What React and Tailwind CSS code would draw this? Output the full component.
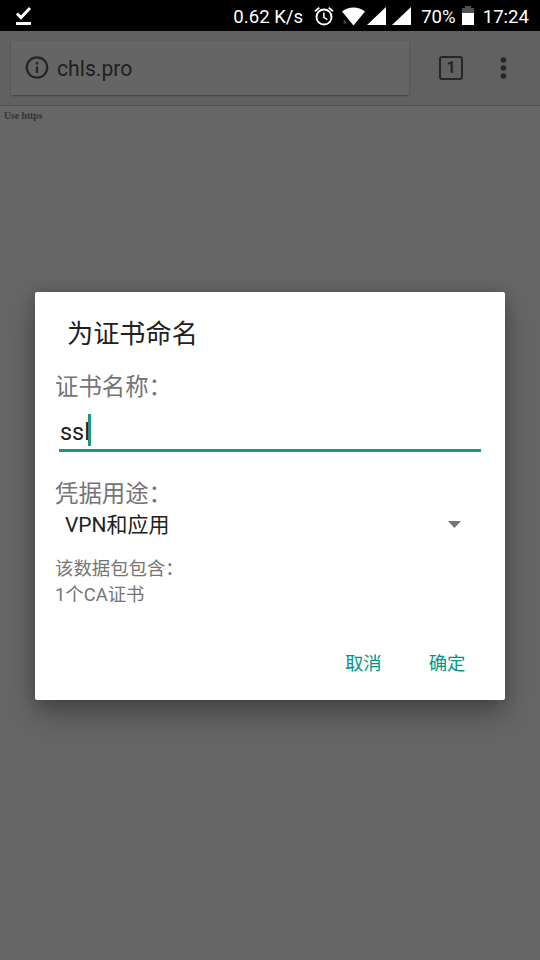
function StatusBar() {
  return (
    <div className="flex h-[31px] shrink-0 items-center bg-black text-[18.6px] leading-[31px] text-white">
      <svg className="ml-[15px] h-[20px] w-[17px]" viewBox="0 0 17 20" fill="none" stroke="#fff">
        <path d="M2 7.5 L6 11.5 L15 2" strokeWidth="3" />
        <path d="M1 17.5 H16" strokeWidth="3" />
      </svg>
      <span className="ml-auto mt-[3px] whitespace-nowrap">0.62 K/s</span>
      <svg className="ml-[11px] h-[20px] w-[20px] shrink-0" viewBox="0 0 20 20" fill="none" stroke="#fff">
        <circle cx="10" cy="11" r="7.5" strokeWidth="1.9" />
        <path d="M9.9 6.5 V11.3 L13.4 13.6" strokeWidth="1.5" />
        <path d="M1 5.3 L5.3 1.6 M19 5.3 L14.7 1.6" strokeWidth="1.9" />
      </svg>
      <svg className="ml-[8px] mt-px h-[19px] w-[23px] shrink-0" viewBox="0 0 23 19" fill="#fff">
        <path d="M0 4.5 C6.5 -1 16.5 -1 23 4.5 L11.5 18.5 Z" />
        <path d="M1.8 12.5 L4.3 15 L3 17.5 L1.5 16 Z" fill="#444" />
      </svg>
      <svg className="ml-[2px] mt-px h-[18px] w-[19px] shrink-0" viewBox="0 0 19 18" fill="#fff">
        <path d="M0 18 L19 0 V18 Z" />
      </svg>
      <svg className="ml-[6px] mt-px h-[18px] w-[19px] shrink-0" viewBox="0 0 19 18" fill="#fff">
        <path d="M0 18 L19 0 V18 Z" />
      </svg>
      <span className="ml-[10px] mt-[3px]">70%</span>
      <svg className="ml-[6px] h-[19px] w-[12px] shrink-0" viewBox="0 0 12 19">
        <path d="M0 2 H3 V0 H9 V2 H12 V7 H0 Z" fill="#505050" />
        <path d="M0 7 H12 V19 H0 Z" fill="#fff" />
      </svg>
      <span className="ml-[9px] mr-[11px] mt-[3px]">17:24</span>
    </div>
  );
}

function BrowserBar() {
  return (
    <div className="flex h-[75px] shrink-0 items-center border-b border-[#505050] bg-[#616161] text-[#1f1f1f]">
      <div className="ml-[11px] flex h-[54px] w-[398px] items-center rounded-[1px] bg-[#656565] shadow-[0_1px_2px_rgba(0,0,0,0.3)]">
        <svg className="ml-[14px] h-[24px] w-[24px]" viewBox="0 0 24 24" fill="none" stroke="#262626">
          <circle cx="12" cy="11.5" r="10.2" strokeWidth="2.3" />
          <path d="M12 10.5 V17 M12 6 V8.5" strokeWidth="2.3" />
        </svg>
        <span className="ml-[8px] mt-[2px] text-[21.2px] leading-[24px]">chls.pro</span>
      </div>
      <div className="ml-[30px] flex h-[24px] w-[24px] items-center justify-center rounded-[3px] border-2 border-[#262626] text-[16px] font-bold leading-[20px] text-[#262626]">
        1
      </div>
      <svg className="ml-[37px] h-[22px] w-[7px]" viewBox="0 0 7 22" fill="#262626">
        <circle cx="3.5" cy="3" r="2.8" />
        <circle cx="3.5" cy="11" r="2.8" />
        <circle cx="3.5" cy="19" r="2.8" />
      </svg>
    </div>
  );
}

function CertificateDialog() {
  return (
    <div className="mt-[32px] h-[408px] w-[470px] rounded-[2px] bg-white shadow-[0_14px_28px_rgba(0,0,0,0.3),0_0_14px_rgba(0,0,0,0.16)]">
      <h1 className="ml-[32px] pt-[24px] text-[26.2px] leading-[36px] text-[#212121]">为证书命名</h1>
      <div className="ml-[20px] mt-[18px] text-[23.4px] leading-[34px] text-[#757575]">证书名称：</div>
      <div className="ml-[24px] mt-[9px] flex h-[39px] w-[422px] border-b-[3px] border-[#1a9584] text-[23.4px] leading-[39px] text-[#212121]">
        <span className="ml-px">ssl</span>
        <span className="-ml-[1.5px] mt-px h-[32px] w-[3px] bg-[#1a9584]" />
      </div>
      <div className="ml-[20px] mt-[25px] text-[23.4px] leading-[34px] text-[#757575]">凭据用途：</div>
      <div className="ml-[30px] mr-[44px] flex h-[28px] items-center justify-between text-[21px] leading-[28px] text-[#212121]">
        <span>VPN和应用</span>
        <svg className="mb-[2px] h-[7px] w-[13px]" viewBox="0 0 13 7" fill="#757575">
          <path d="M0 0 H13 L6.5 7 Z" />
        </svg>
      </div>
      <div className="ml-[20px] mt-[17px] text-[18.4px] leading-[26px] text-[#757575]">
        <p>该数据包包含：</p>
        <p>1个CA证书</p>
      </div>
      <div className="mr-[39.5px] mt-[43px] flex justify-end gap-[47px] text-[18.4px] leading-[26px] text-[#009688]">
        <button>取消</button>
        <button>确定</button>
      </div>
    </div>
  );
}

export default function App() {
  return (
    <div className="relative flex h-[960px] w-[540px] flex-col overflow-hidden bg-[#666] font-[Roboto,'Noto_Sans_CJK_SC',sans-serif]">
      <StatusBar />
      <BrowserBar />
      <p className="ml-[4px] mt-[4px] font-['Liberation_Serif',serif] text-[9.7px] font-bold leading-[11px] text-[#333]">
        Use https
      </p>
      <div className="absolute inset-0 flex items-center justify-center">
        <CertificateDialog />
      </div>
    </div>
  );
}
